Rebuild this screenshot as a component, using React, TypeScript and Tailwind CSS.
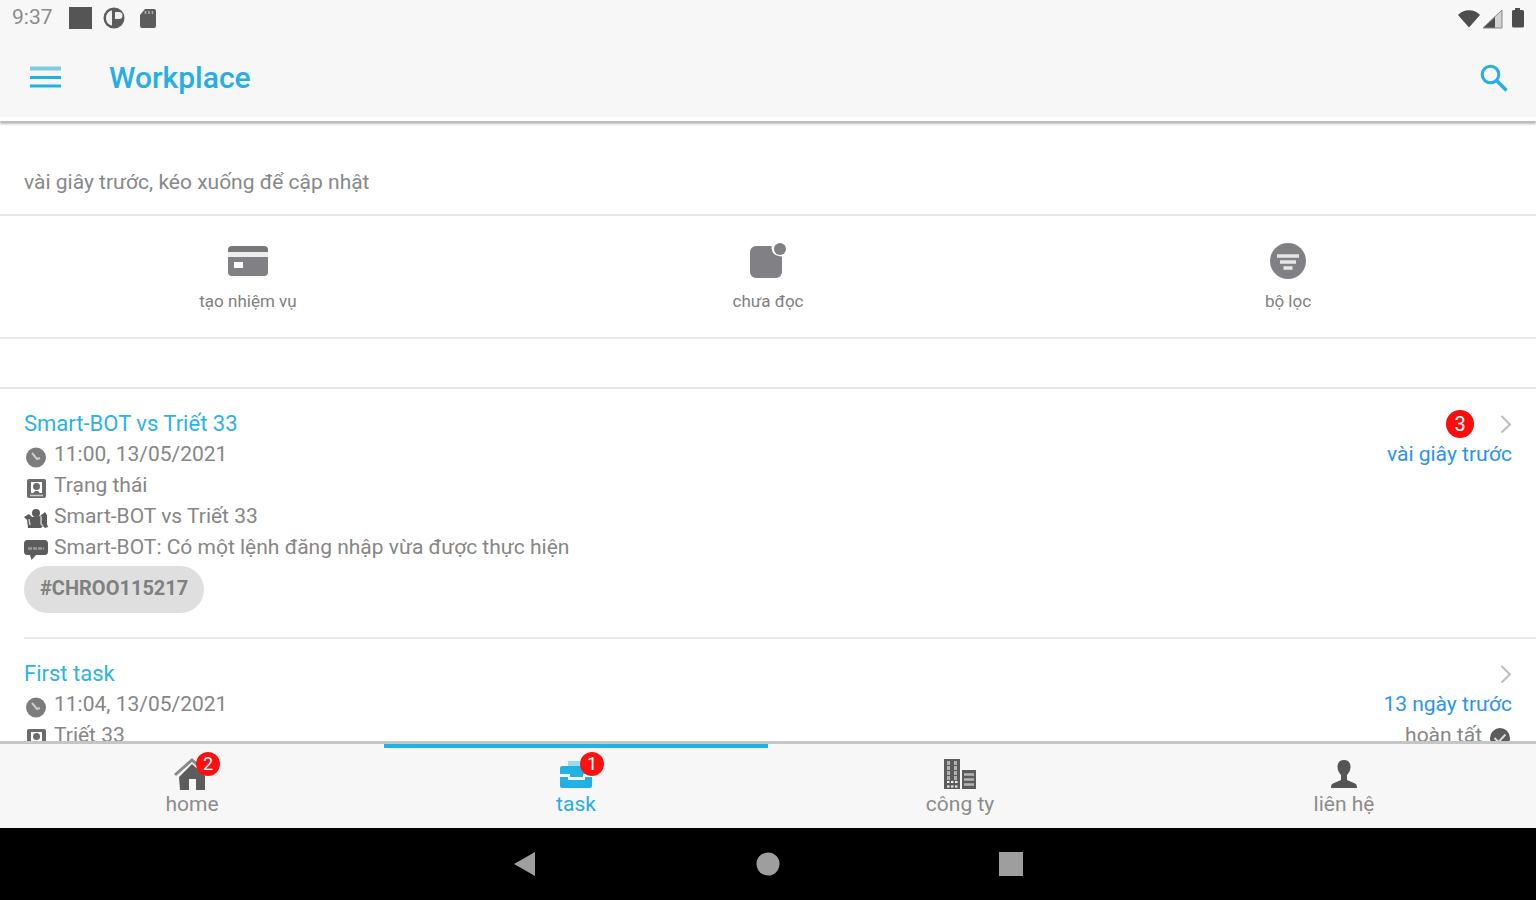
import type { ReactNode } from "react";

type Task = {
  title: string;
  time: string;
  status: string;
  group: string;
  message: string;
  code: string;
  ago: string;
  unread?: number;
  state?: string;
};

const tasks: Task[] = [
  {
    title: "Smart-BOT vs Triết 33",
    time: "11:00, 13/05/2021",
    status: "Trạng thái",
    group: "Smart-BOT vs Triết 33",
    message: "Smart-BOT: Có một lệnh đăng nhập vừa được thực hiện",
    code: "#CHROO115217",
    ago: "vài giây trước",
    unread: 3
  },
  {
    title: "First task",
    time: "11:04, 13/05/2021",
    status: "Triết 33",
    group: "",
    message: "",
    code: "",
    ago: "13 ngày trước",
    state: "hoàn tất"
  }
];

const MenuIcon = () => (
  <svg className="w-8 h-6" viewBox="0 0 32 24">
    <path d="M0 2.5h31" stroke="#7cc9ea" strokeWidth="4" />
    <path d="M0 11.5h31M0 20h31" stroke="#1fb1e2" strokeWidth="3" />
  </svg>
);

const SearchIcon = () => (
  <svg className="w-7 h-7" viewBox="0 0 28 28" fill="none" stroke="#27aee2">
    <circle cx="10.5" cy="10.5" r="8.3" strokeWidth="3" />
    <path d="M16.5 16.5l10 10" strokeWidth="3.5" />
  </svg>
);

const StatusIcons = () => (
  <svg className="w-[88px] h-6" viewBox="0 0 88 24">
    <rect x="0" y="1" width="23" height="22" fill="#555" />
    <circle cx="45" cy="12" r="10.5" fill="#5c5c5c" />
    <path d="M43 4.5c-8 1-8 14 0 15z" fill="#f0f0f0" />
    <path d="M46 6h4a3.5 3.5 0 0 1 0 7h-4z" fill="#f0f0f0" />
    <path d="M76 3h9a2 2 0 0 1 2 2v15a2 2 0 0 1-2 2H73a2 2 0 0 1-2-2V9z" fill="#5c5c5c" />
    <path d="M76.5 5v3M80 5v3M83.5 5v3" stroke="#aaa" strokeWidth="1.6" />
  </svg>
);

const SignalIcons = () => (
  <svg className="w-[68px] h-6" viewBox="0 0 68 24">
    <path d="M0 9C5 2.5 17 2.5 22 9L11 21.5z" fill="#4d4d4d" />
    <path d="M44 4v18H25z" fill="#d2d2d2" />
    <path d="M37 10.600V22H25z" fill="#4d4d4d" />
    <path d="M25 22L44 4v18z" fill="none" stroke="#888" />
    <path d="M57 4V2h5v2h2.500a1.500 1.500 0 0 1 1.500 1.500V20a1.500 1.500 0 0 1-1.500 1.500h-9A1.500 1.500 0 0 1 54 20V5.500A1.500 1.500 0 0 1 55.500 4z" fill="#4d4d4d" />
  </svg>
);

const CardIcon = () => (
  <svg className="w-10 h-10" viewBox="0 0 40 40">
    <path d="M4 5h32a4 4 0 0 1 4 4v2H0V9a4 4 0 0 1 4-4z" fill="#77777a" />
    <path d="M0 11h40v5H0z" fill="#ededf0" />
    <path d="M0 16h40v15a4 4 0 0 1-4 4H4a4 4 0 0 1-4-4z" fill="#818185" />
    <rect x="6" y="21" width="9" height="6" fill="#fff" />
  </svg>
);

const UnreadIcon = () => (
  <svg className="w-10 h-10" viewBox="0 0 40 40" fill="#818185">
    <path d="M8 5h15.500c-.5 7 4 10.500 10.500 10.500V31a6 6 0 0 1-6 6H8a6 6 0 0 1-6-6V11a6 6 0 0 1 6-6z" />
    <circle cx="32" cy="8" r="6" />
  </svg>
);

const FilterIcon = () => (
  <svg className="w-10 h-10" viewBox="0 0 40 40">
    <circle cx="20" cy="20" r="18" fill="#818185" />
    <path d="M9 15h22M12 21h16M15.5 27h9" stroke="#e6e6e8" strokeWidth="3.5" />
  </svg>
);

const ClockIcon = () => (
  <svg className="w-6 h-6" viewBox="0 0 24 24">
    <circle cx="12" cy="12.5" r="10" fill="#7c7c7c" />
    <path d="M8 8l5 6 3-1" fill="none" stroke="#ccc" strokeWidth="2" />
  </svg>
);

const PersonBoxIcon = () => (
  <svg className="w-6 h-6" viewBox="0 0 24 24">
    <rect x="3" y="3" width="19" height="19" rx="2" fill="#6b6b6b" />
    <path d="M7 6h11v11h-2.500c-.5-1.500-1.500-2-3-2s-2.500.5-3 2H7z" fill="#fff" />
    <circle cx="12.500" cy="10.500" r="3.500" fill="#6b6b6b" />
    <path d="M6 19.500h13" stroke="#ccc" strokeWidth="1.500" />
  </svg>
);

const PeopleIcon = () => (
  <svg className="w-6 h-6" viewBox="0 0 24 24" fill="#5c5c5c">
    <circle cx="12" cy="6" r="4" />
    <path d="M0 10l5-3 3 3 8-1 5-4 2 3v9l1 3-3 1-2-2-2 2H4l-1-8z" />
    <path d="M17 9v8l2 2M5 12l1 6" stroke="#ccc" strokeWidth="1.500" fill="none" />
  </svg>
);

const ChatIcon = () => (
  <svg className="w-6 h-6" viewBox="0 0 24 24">
    <path d="M3.500 2h17A3.500 3.500 0 0 1 24 5.500v8a3.500 3.500 0 0 1-3.500 3.500H12l-4.500 5-1.500-5H3.500A3.500 3.500 0 0 1 0 13.500v-8A3.500 3.500 0 0 1 3.500 2z" fill="#5c5c5c" />
    <path d="M4 10.500h16" stroke="#999" strokeWidth="2.500" strokeDasharray="4 1" />
  </svg>
);

const CheckIcon = () => (
  <svg className="w-6 h-6" viewBox="0 0 24 24">
    <circle cx="12" cy="12" r="10" fill="#5c5c5c" />
    <path d="M6.5 12l4 4 7-7.5" fill="none" stroke="#ddd" strokeWidth="2" />
  </svg>
);

const ChevronIcon = () => (
  <svg className="w-3 h-5" viewBox="0 0 12 20" fill="none">
    <path d="M1.5 2l8.500 8.500-8.500 8" stroke="#bdbdbd" strokeWidth="2" />
  </svg>
);

const HomeIcon = () => (
  <svg className="w-9 h-9" viewBox="0 0 36 36">
    <path d="M1 19L18 4l8 7" fill="none" stroke="#8a8a8a" strokeWidth="3" />
    <path d="M5 21L18 8l13 12v14h-9V23h-7v11H6z" fill="#5c5c5c" />
  </svg>
);

const TaskIcon = () => (
  <svg className="w-9 h-9" viewBox="0 0 36 36">
    <path d="M10 10V5h12v5z" fill="#9bd9f1" />
    <path d="M4 10h28a2 2 0 0 1 2 2v6H25v3H12v-3H2v-6a2 2 0 0 1 2-2z" fill="#20b2e2" />
    <path d="M2 21h8v3h17v-3h7v9a2 2 0 0 1-2 2H4a2 2 0 0 1-2-2z" fill="#20b2e2" />
  </svg>
);

const CompanyIcon = () => (
  <svg className="w-9 h-9" viewBox="0 0 36 36">
    <path d="M2 3h16v30H2zM20 14h14v19H20z" fill="#5c5c5c" />
    <path d="M6.5 5v20M13.5 5v20" stroke="#b0b0b0" strokeWidth="3" strokeDasharray="4 1" />
    <path d="M5 26h2.500M9 26h2.500M13 26h2.500M5 30.500h2.500M9 30.500h2.500M13 30.500h2.500" stroke="#eee" strokeWidth="2" />
    <path d="M22 18.500h10M22 23.500h10M22 28.500h10" stroke="#b5b5b5" strokeWidth="2.500" />
  </svg>
);

const ContactIcon = () => (
  <svg className="w-9 h-9" viewBox="0 0 36 36" fill="#555">
    <path d="M18 4c4.500 0 6.500 3 6.500 7 0 3-1.500 6-3.500 8v5l8 3.500c1.500.7 2 2 2 4.500H5c0-2.500.5-3.800 2-4.500l8-3.500v-5c-2-2-3.500-5-3.500-8 0-4 2-7 6.500-7z" />
  </svg>
);

const actions = [
  { label: "tạo nhiệm vụ", icon: <CardIcon /> },
  { label: "chưa đọc", icon: <UnreadIcon /> },
  { label: "bộ lọc", icon: <FilterIcon /> }
];

const tabs = [
  { label: "home", icon: <HomeIcon />, badge: 2, active: false },
  { label: "task", icon: <TaskIcon />, badge: 1, active: true },
  { label: "công ty", icon: <CompanyIcon />, badge: 0, active: false },
  { label: "liên hệ", icon: <ContactIcon />, badge: 0, active: false }
];

const DetailRow = ({ icon, children }: { icon: ReactNode; children: ReactNode }) => (
  <div className="flex h-[31px] items-center gap-[6px]">
    <span className="pt-1">{icon}</span>
    <span>{children}</span>
  </div>
);

const TaskRow = ({ task }: { task: Task }) => (
  <li className="ml-6 flex justify-between border-b-2 border-[#e6e6e6] pb-6 pr-6 pt-[19px] text-[21px] leading-[31px] text-[#868686]">
    <div>
      <a href="#task" className="block text-[22px] text-[#2cb3e6]">{task.title}</a>
      <DetailRow icon={<ClockIcon />}>{task.time}</DetailRow>
      <DetailRow icon={<PersonBoxIcon />}>{task.status}</DetailRow>
      {task.group && <DetailRow icon={<PeopleIcon />}>{task.group}</DetailRow>}
      {task.message && <DetailRow icon={<ChatIcon />}>{task.message}</DetailRow>}
      {task.code && (
        <div className="mt-[3px] flex h-[47px] w-fit items-center rounded-full bg-[#dfdfdf] px-4 pb-1 text-xl font-bold text-[#808080]">
          {task.code}
        </div>
      )}
    </div>
    <div className="flex flex-col items-end">
      <div className="flex h-[31px] items-center gap-[26px]">
        {task.unread && (
          <span className="flex h-7 w-7 items-center justify-center rounded-full bg-[#fb0d0d] text-xl text-white">
            {task.unread}
          </span>
        )}
        <ChevronIcon />
      </div>
      <span className="text-[#2a95ee]">{task.ago}</span>
      {task.state && (
        <span className="flex items-center gap-[6px]">
          {task.state}
          <span className="pt-1"><CheckIcon /></span>
        </span>
      )}
    </div>
  </li>
);

const App = () => {
  return (
    <div className="flex h-screen flex-col overflow-hidden bg-white font-['Roboto','Noto_Sans',sans-serif]">
      <header className="z-10 border-b-4 border-white bg-[#f7f7f7] shadow-[0_3px_2px_#bcbcbc]">
        <div className="flex h-9 items-center justify-between pl-3 pr-[10px]">
          <div className="flex items-center gap-4 text-[21px] text-[#8c8c8c]">
            <span>9:37</span>
            <StatusIcons />
          </div>
          <SignalIcons />
        </div>
        <div className="flex h-[81px] items-center pl-[30px] pr-7 pt-[2px]">
          <button aria-label="Menu"><MenuIcon /></button>
          <h1 className="ml-[47px] flex-1 text-[30px] font-medium text-[#27aee2]">Workplace</h1>
          <button aria-label="Search"><SearchIcon /></button>
        </div>
      </header>

      <main className="min-h-0 flex-1 overflow-hidden">
        <p className="flex h-[95px] items-end border-b-2 border-[#e6e6e6] px-6 pb-4 text-[21px] leading-8 text-[#888]">
          vài giây trước, kéo xuống để cập nhật
        </p>
        <div className="-mx-3 grid h-[123px] grid-cols-3 border-b-2 border-[#e6e6e6]">
          {actions.map((action) => (
            <button key={action.label} className="flex flex-col items-center justify-center gap-2 text-[17px] leading-6 text-[#808080]">
              {action.icon}
              {action.label}
            </button>
          ))}
        </div>
        <ul className="mt-12 border-t-2 border-[#e6e6e6]">
          {tasks.map((task) => (
            <TaskRow key={task.title} task={task} />
          ))}
        </ul>
      </main>

      <nav className="z-10 grid h-[87px] grid-cols-4 border-t-[3px] border-[#c6c6c6] bg-[#f7f7f7]">
        {tabs.map((tab) => (
          <button
            key={tab.label}
            className={
              tab.active
                ? "flex flex-col items-center border-t-4 border-[#23b0e2] pt-2 text-[21px] leading-6 text-[#27aee2]"
                : "flex flex-col items-center border-t-4 border-transparent pt-2 text-[21px] leading-6 text-[#8c8c8c]"
            }
          >
            <span className="relative">
              {tab.icon}
              {tab.badge > 0 && (
                <span className="absolute -right-[10px] -top-1 flex h-6 w-6 items-center justify-center rounded-full bg-[#fb1111] text-lg text-white">
                  {tab.badge}
                </span>
              )}
            </span>
            {tab.label}
          </button>
        ))}
      </nav>

      <div className="flex h-[72px] items-center justify-center gap-[219px] bg-black">
        <button aria-label="Back">
          <svg className="w-6 h-6" viewBox="0 0 24 24"><path d="M1 12L22 0v24z" fill="#9e9e9e" /></svg>
        </button>
        <button aria-label="Home">
          <svg className="w-6 h-6" viewBox="0 0 24 24"><circle cx="12" cy="12" r="11.5" fill="#9e9e9e" /></svg>
        </button>
        <button aria-label="Recent apps">
          <svg className="w-6 h-6" viewBox="0 0 24 24"><path d="M0 0h24v24H0z" fill="#9e9e9e" /></svg>
        </button>
      </div>
    </div>
  );
};

export default App;
